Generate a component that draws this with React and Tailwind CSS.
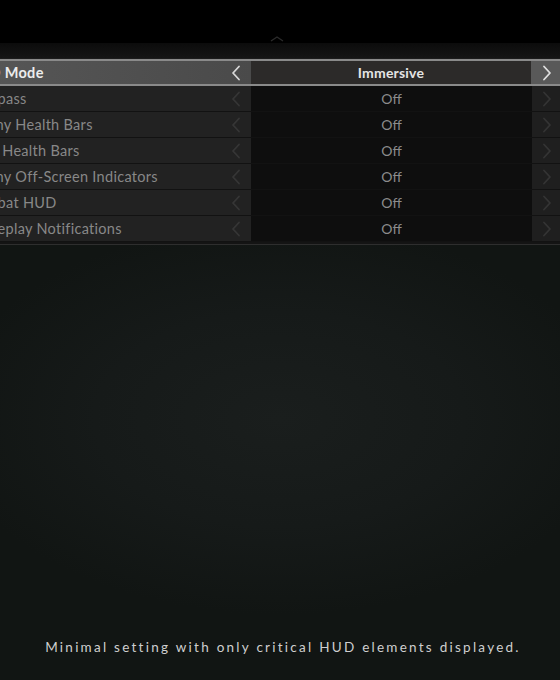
import React from "react";

const rows = [
  { label: "Compass", value: "Off" },
  { label: "Enemy Health Bars", value: "Off" },
  { label: "Boss Health Bars", value: "Off" },
  { label: "Enemy Off-Screen Indicators", value: "Off" },
  { label: "Combat HUD", value: "Off" },
  { label: "Gameplay Notifications", value: "Off" },
];

const Chevron = ({ dir = "left", className = "" }) => (
  <svg width="10" height="16" viewBox="0 0 10 16" className={className}>
    <path
      d={dir === "left" ? "M8 1.5 L2 8 L8 14.5" : "M2 1.5 L8 8 L2 14.5"}
      fill="none"
      stroke="currentColor"
      strokeWidth="1.8"
      strokeLinecap="round"
      strokeLinejoin="round"
    />
  </svg>
);

const App = () => {
  return (
    <div
      className="w-[560px] h-[680px] overflow-hidden flex flex-col bg-[#121715]"
      style={{ fontFamily: "Lato, 'Open Sans', sans-serif" }}
    >
      {/* Top bar */}
      <div className="h-[43px] bg-black flex items-end justify-center shrink-0">
        <svg width="14" height="6" viewBox="0 0 14 6" className="mb-[1px] mr-[6px] text-[#2c2c2c]">
          <path d="M1 5 L7 1 L13 5" fill="none" stroke="currentColor" strokeWidth="1.2" />
        </svg>
      </div>
      <div className="h-[16px] shrink-0 bg-gradient-to-b from-[#0c0c0c] to-[#151515] border-b border-[#1c1c1c]" />

      {/* Settings list */}
      <div className="flex flex-col ml-[-37px] w-[607px] shrink-0 bg-[#151515]">
        {/* Selected row */}
        <div className="flex h-[27px] border-y-2 border-[#8a8a8a] bg-[#4a4a4a]">
          <div className="w-[288px] flex items-center justify-between pl-[4px] pr-[10px] bg-gradient-to-r from-[#575757] to-[#4a4a4a]">
            <span className="text-[14.5px] font-bold text-[#ececec] tracking-[0.3px]">HUD Mode</span>
            <Chevron dir="left" className="text-[#d8d8d8]" />
          </div>
          <div className="w-[280px] flex items-center justify-center bg-[#2c2a29]">
            <span className="text-[14px] font-bold text-[#e4e4e4] tracking-[0.2px]">Immersive</span>
          </div>
          <div className="flex-1 flex items-center pl-[11px] bg-[#595959]">
            <Chevron dir="right" className="text-[#e0e0e0]" />
          </div>
        </div>

        {rows.map((row) => (
          <div key={row.label} className="flex h-[26px] border-b border-[#121212]">
            <div className="w-[288px] flex items-center justify-between pl-[4px] pr-[10px] bg-[#222222]">
              <span className="text-[14.5px] text-[#888888] tracking-[0.3px]">{row.label}</span>
              <Chevron dir="left" className="text-[#363636]" />
            </div>
            <div className="w-[281px] flex items-center justify-center bg-[#0e0e0e]">
              <span className="text-[14px] text-[#8c8c8c]">{row.value}</span>
            </div>
            <div className="flex-1 flex items-center pl-[10px] bg-[#1f1f1f]">
              <Chevron dir="right" className="text-[#343434]" />
            </div>
          </div>
        ))}
        <div className="h-[3px] bg-[#141414] border-b border-[#2e2e2e]" />
      </div>

      {/* Lower area with vignette and description */}
      <div className="flex-1 flex flex-col justify-end items-center pb-[23px] bg-[radial-gradient(ellipse_60%_45%_at_50%_40%,#1a1e1d_0%,#161a19_55%,#111513_100%)]">
        <p className="text-[13.5px] text-[#cfcfcf] tracking-[0.167em] ml-[6px]">
          Minimal setting with only critical HUD elements displayed.
        </p>
      </div>
    </div>
  );
};

export default App;
